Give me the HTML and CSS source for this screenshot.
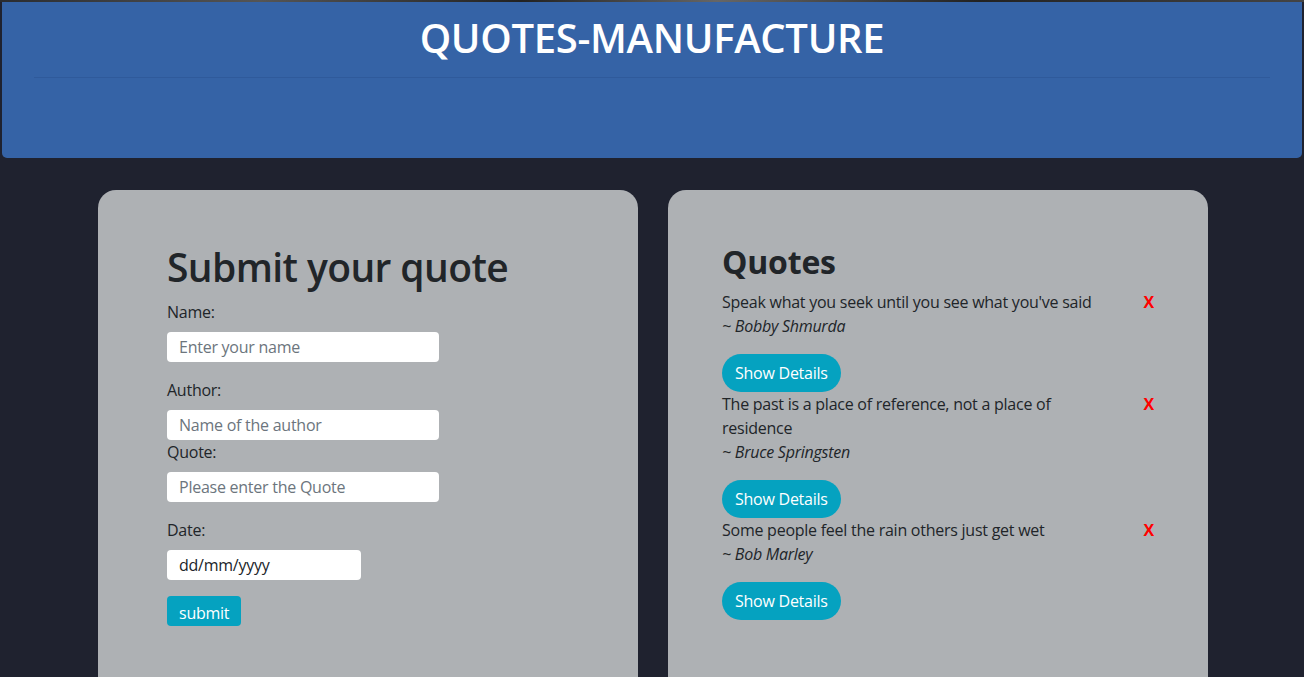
FILE: index.html
```html
<!DOCTYPE html>
<html lang="en">
<head>
<meta charset="utf-8">
<title>Quotes Manufacture</title>
<link rel="stylesheet" href="styles.css">
</head>
<body>
<div class="topstrip"></div>
<header class="banner">
  <h1 class="banner-title">QUOTES-MANUFACTURE</h1>
  <hr class="banner-rule">
</header>
<main class="cards">
  <section class="card card-form">
    <h1 class="form-title">Submit your quote</h1>
    <form class="quote-form">
      <div class="field field-gap">
        <label class="field-label">Name:</label>
        <input class="field-input" type="text" placeholder="Enter your name">
      </div>
      <div class="field">
        <label class="field-label">Author:</label>
        <input class="field-input" type="text" placeholder="Name of the author">
      </div>
      <div class="field field-gap">
        <label class="field-label">Quote:</label>
        <input class="field-input" type="text" placeholder="Please enter the Quote">
      </div>
      <div class="field">
        <label class="field-label">Date:</label>
        <input class="field-input field-date" type="text" placeholder="dd/mm/yyyy">
      </div>
      <button class="submit-btn" type="button">submit</button>
    </form>
  </section>
  <section class="card card-list">
    <h2 class="list-title">Quotes</h2>
    <div class="quote">
      <div class="quote-row">
        <div class="quote-body">
          <p class="quote-text">Speak what you seek until you see what you've said</p>
          <p class="quote-author">~ Bobby Shmurda</p>
        </div>
        <span class="quote-del">X</span>
      </div>
      <button class="details-btn" type="button">Show Details</button>
    </div>
    <div class="quote">
      <div class="quote-row">
        <div class="quote-body">
          <p class="quote-text">The past is a place of reference, not a place of residence</p>
          <p class="quote-author">~ Bruce Springsten</p>
        </div>
        <span class="quote-del">X</span>
      </div>
      <button class="details-btn" type="button">Show Details</button>
    </div>
    <div class="quote">
      <div class="quote-row">
        <div class="quote-body">
          <p class="quote-text">Some people feel the rain others just get wet</p>
          <p class="quote-author">~ Bob Marley</p>
        </div>
        <span class="quote-del">X</span>
      </div>
      <button class="details-btn" type="button">Show Details</button>
    </div>
  </section>
</main>
</body>
</html>
```

FILE: styles.css
```css
* { box-sizing: border-box; }
html, body { height: 100%; }
body {
  margin: 0;
  background: #1f222f;
  font-family: "Open Sans", "Noto Sans", sans-serif;
  font-size: 16px;
  line-height: 24px;
  letter-spacing: -0.25px;
  color: #212529;
  overflow: hidden;
}
.topstrip {
  height: 2px;
  background: linear-gradient(90deg, #2a2c30, #555 20%, #222 40%, #666 55%, #222 75%, #444);
}
.banner {
  margin: 0 2px 0 2px;
  height: 156px;
  background: #3563a6;
  border-radius: 0 0 5px 5px;
  padding: 12px 32px 0;
}
.banner-title {
  margin: 0;
  text-align: center;
  color: #fff;
  font-size: 40px;
  line-height: 48px;
  font-weight: 600;
  letter-spacing: -0.3px;
}
.banner-rule {
  margin: 15px 0 0;
  border: 0;
  border-top: 1px solid #2f5a9b;
}
.cards {
  display: flex;
  gap: 30px;
  padding: 32px 0 0 98px;
}
.card {
  width: 540px;
  height: 520px;
  background: #aeb1b4;
  border-radius: 18px;
  padding-top: 53px;
}
.card-form { padding-left: 69px; padding-right: 69px; }
.card-list { padding-left: 54px; padding-right: 54px; }
.form-title {
  margin: 0 0 9px;
  font-size: 39px;
  line-height: 48px;
  font-weight: 600;
  letter-spacing: -0.6px;
}
.field { display: flex; flex-direction: column; align-items: flex-start; }
.field-gap { margin-bottom: 16px; }
.field-label { margin-bottom: 8px; }
.field-input {
  width: 272px;
  height: 30px;
  border: 0;
  border-radius: 4px;
  background: #fff;
  padding: 0 12px;
  font: inherit;
  letter-spacing: inherit;
  color: #212529;
}
.field-input::placeholder { color: #6c757d; }
.field-date { width: 194px; }
.field-date::placeholder { color: #212529; }
.submit-btn {
  margin-top: 16px;
  height: 30px;
  padding: 3px 12px 0;
  border: 0;
  border-radius: 4px;
  background: #05a2c0;
  color: #fff;
  font: inherit;
  letter-spacing: inherit;
}
.list-title {
  margin: 0 0 9px;
  font-size: 32px;
  line-height: 38px;
  font-weight: 700;
  letter-spacing: -0.2px;
}
.quote-row { display: flex; justify-content: space-between; }
.quote-body { width: 400px; }
.quote-text, .quote-author { margin: 0; }
.quote-author { font-style: italic; }
.quote-del { color: #f00; font-weight: 700; }
.details-btn {
  margin-top: 16px;
  height: 38px;
  padding: 0 13px;
  border: 0;
  border-radius: 19px;
  background: #05a2c0;
  color: #fff;
  font: inherit;
  letter-spacing: inherit;
}
```
